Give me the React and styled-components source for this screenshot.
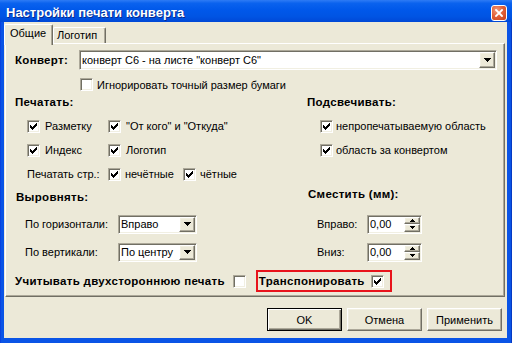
import React from 'react';
import styled, { createGlobalStyle, css } from 'styled-components';

const FACE = '#ECE9D8';
const LIGHT = '#F1EFE2';
const SHADOW = '#ACA899';
const DARK = '#716F64';

const Global = createGlobalStyle`
  html, body { margin: 0; padding: 0; width: 512px; height: 343px; overflow: hidden; background: ${FACE}; }
  body { font-family: "Liberation Sans", Arial, sans-serif; font-size: 11px; color: #000; }
  * { box-sizing: border-box; }
`;

const boldText = css`
  font-weight: bold;
  font-size: 11.5px;
  letter-spacing: 0.3px;
`;

const sunken = css`
  border: 1px solid;
  border-color: ${SHADOW} #fff #fff ${SHADOW};
  box-shadow: inset 1px 1px 0 ${DARK}, inset -1px -1px 0 ${LIGHT};
`;

const raised = css`
  border: 1px solid;
  border-color: #fff ${DARK} ${DARK} #fff;
  box-shadow: inset -1px -1px 0 ${SHADOW}, inset 1px 1px 0 ${LIGHT};
`;

const Window = styled.div`
  width: 512px;
  height: 343px;
  display: flex;
  flex-direction: column;
  background: #0A54E6;
`;

const TitleBar = styled.div`
  height: 22px;
  flex: none;
  display: flex;
  align-items: center;
  padding: 4px 5px 0 6px;
  background: linear-gradient(#2E7BF5 0%, #0A62EE 15%, #0058EA 45%, #0054E3 75%, #0048D6 100%);
`;

const TitleText = styled.div`
  flex: 1;
  color: #fff;
  font-weight: bold;
  font-size: 13px;
  line-height: 16px;
  text-shadow: 1px 1px 0 #0A2A8C;
  white-space: nowrap;
`;

const CloseButton = styled.div`
  width: 16px;
  height: 16px;
  border: 1px solid #fff;
  border-radius: 3px;
  background: radial-gradient(circle at 35% 30%, #F19A7A 0%, #E2623A 45%, #C8401A 100%);
  display: flex;
  align-items: center;
  justify-content: center;
`;

const Frame = styled.div`
  flex: 1;
  display: flex;
  padding: 0 5px 5px 4px;
  background: linear-gradient(90deg, #0831D9 0, #0A54E6 1px, #0A54E6 calc(100% - 1px), #001EA0 100%);
`;

const Client = styled.div`
  flex: 1;
  display: flex;
  flex-direction: column;
  background: ${FACE};
`;

const TabStrip = styled.div`
  height: 19px;
  margin-top: 2px;
  display: flex;
  align-items: flex-end;
  flex: none;
`;

const Tab = styled.div`
  position: relative;
  background: ${FACE};
  border-top: 1px solid #fff;
  border-left: 1px solid #fff;
  border-right: 1px solid ${DARK};
  box-shadow: inset -1px 0 0 ${SHADOW};
  border-radius: 2px 2px 0 0;
  line-height: 13px;
  white-space: nowrap;
  ${(p) =>
    p.$active
      ? css`
          z-index: 1;
          width: 49px;
          height: 21px;
          margin-bottom: -2px;
          padding: 2px 0 0 5px;
        `
      : css`
          width: 53px;
          height: 16px;
          padding: 1px 0 0 3px;
        `}
`;

const Panel = styled.div`
  height: 254px;
  flex: none;
  margin: 0 2px 0 1px;
  border-top: 1px solid #fff;
  border-left: 1px solid #fff;
  border-right: 1px solid ${DARK};
  border-bottom: 1px solid ${DARK};
  box-shadow: inset -1px -1px 0 ${SHADOW};
  padding: 6px 0 0 9px;
  display: flex;
  flex-direction: column;
`;

const EnvelopeRow = styled.div`
  display: flex;
  align-items: center;
  height: 20px;
`;

const BoldLabel = styled.span`
  ${boldText};
  white-space: nowrap;
  ${(p) => p.$w && css`width: ${p.$w}px; flex: none;`}
`;

const Combo = styled.div`
  width: ${(p) => p.$w}px;
  height: ${(p) => p.$h}px;
  ${sunken};
  background: #fff;
  padding: 1px;
  display: flex;
  align-items: stretch;
  flex: none;
`;

const FieldValue = styled.div`
  flex: 1;
  display: flex;
  align-items: center;
  padding-left: 1px;
  white-space: nowrap;
  overflow: hidden;
`;

const DropButton = styled.div`
  width: 16px;
  flex: none;
  background: ${FACE};
  ${raised};
  display: flex;
  align-items: center;
  justify-content: center;
`;

const SpinButtons = styled.div`
  width: 16px;
  flex: none;
  display: flex;
  flex-direction: column;
`;

const SpinBtn = styled.div`
  flex: 1;
  background: ${FACE};
  ${raised};
  display: flex;
  align-items: center;
  justify-content: center;
`;

const IgnoreRow = styled.div`
  margin: 8px 0 0 65px;
  height: 13px;
  display: flex;
  align-items: center;
`;

const Columns = styled.div`
  display: grid;
  grid-template-columns: 292px 1fr;
`;

const Column = styled.div`
  display: flex;
  flex-direction: column;
`;

const SectionTitle = styled.div`
  ${boldText};
  line-height: 14px;
  height: 14px;
  margin-top: ${(p) => p.$mt}px;
  padding-left: ${(p) => p.$pl || 0}px;
  white-space: nowrap;
`;

const CheckRows = styled.div`
  margin-top: 5px;
  padding-left: ${(p) => p.$pl}px;
  display: flex;
  flex-direction: column;
`;

const CheckRow = styled.div`
  height: 24px;
  display: flex;
  align-items: center;
`;

const CheckCell = styled.div`
  width: ${(p) => p.$w}px;
  flex: none;
  display: flex;
  align-items: center;
`;

const CheckWrap = styled.label`
  display: flex;
  align-items: center;
  gap: ${(p) => p.$gap ?? 4}px;
  margin-left: ${(p) => p.$ml || 0}px;
  white-space: nowrap;
`;

const CheckBoxBox = styled.span`
  width: 13px;
  height: 13px;
  flex: none;
  background: #fff;
  ${sunken};
  display: block;
`;

const FieldRows = styled.div`
  margin-top: ${(p) => p.$mt}px;
  display: flex;
  flex-direction: column;
`;

const FieldRow = styled.div`
  height: 28px;
  display: flex;
  align-items: center;
  padding-left: ${(p) => p.$pl}px;
`;

const FieldLabel = styled.span`
  width: ${(p) => p.$w}px;
  flex: none;
  white-space: nowrap;
`;

const BottomRow = styled.div`
  margin-top: 4px;
  height: 22px;
  display: flex;
  align-items: center;
`;

const Highlight = styled.div`
  margin-left: 10px;
  height: 22px;
  border: 2px solid #E8131B;
  display: flex;
  align-items: center;
  padding: 0 6px 0 1px;
`;

const Footer = styled.div`
  display: flex;
  justify-content: flex-end;
  gap: 5px;
  margin-top: 11px;
  padding-right: 5px;
`;

const Button = styled.div`
  width: 75px;
  height: 23px;
  display: flex;
  align-items: center;
  justify-content: center;
  background: ${FACE};
  ${raised};
  ${(p) =>
    p.$default &&
    css`
      border: 1px solid #000;
      box-shadow: inset 1px 1px 0 #fff, inset -1px -1px 0 ${DARK}, inset -2px -2px 0 ${SHADOW};
    `}
`;

const CHECK_PATH =
  'M3 5h1v3h-1z M4 6h1v3h-1z M5 7h1v3h-1z M6 6h1v3h-1z M7 5h1v3h-1z M8 4h1v3h-1z M9 3h1v3h-1z';

function Check({ checked, label, gap, ml }) {
  return (
    <CheckWrap $gap={gap} $ml={ml}>
      <CheckBoxBox>
        {checked && (
          <svg width="11" height="11" viewBox="1 1 11 11" shapeRendering="crispEdges" style={{ display: 'block' }}>
            <path d={CHECK_PATH} fill="#000" />
          </svg>
        )}
      </CheckBoxBox>
      {label}
    </CheckWrap>
  );
}

function DownArrow() {
  return (
    <svg width="7" height="4" viewBox="0 0 7 4" shapeRendering="crispEdges" style={{ display: 'block' }}>
      <path d="M0 0h7v1h-1v1h-1v1h-1v1h-1v-1h-1v-1h-1v-1h-1z" fill="#000" />
    </svg>
  );
}

function SmallArrow({ up }) {
  return (
    <svg width="5" height="3" viewBox="0 0 5 3" shapeRendering="crispEdges" style={{ display: 'block', transform: up ? 'scaleY(-1)' : 'none' }}>
      <path d="M0 0h5v1h-1v1h-1v1h-1v-1h-1v-1h-1z" fill="#000" />
    </svg>
  );
}

function ComboBox({ w, h, value }) {
  return (
    <Combo $w={w} $h={h}>
      <FieldValue>{value}</FieldValue>
      <DropButton>
        <DownArrow />
      </DropButton>
    </Combo>
  );
}

function SpinEdit({ value }) {
  return (
    <Combo $w={55} $h={19}>
      <FieldValue>{value}</FieldValue>
      <SpinButtons>
        <SpinBtn>
          <SmallArrow up />
        </SpinBtn>
        <SpinBtn>
          <SmallArrow />
        </SpinBtn>
      </SpinButtons>
    </Combo>
  );
}

export default function App() {
  return (
    <>
      <Global />
      <Window>
        <TitleBar>
          <TitleText>Настройки печати конверта</TitleText>
          <CloseButton>
            <svg width="8" height="8" viewBox="0 0 8 8">
              <path d="M1 1L7 7M7 1L1 7" stroke="#fff" strokeWidth="1.8" strokeLinecap="square" />
            </svg>
          </CloseButton>
        </TitleBar>
        <Frame>
          <Client>
            <TabStrip>
              <Tab $active>Общие</Tab>
              <Tab>Логотип</Tab>
            </TabStrip>
            <Panel>
              <EnvelopeRow>
                <BoldLabel $w={64}>Конверт:</BoldLabel>
                <ComboBox w={418} h={20} value={'конверт С6 - на листе "конверт С6"'} />
              </EnvelopeRow>
              <IgnoreRow>
                <Check label="Игнорировать точный размер бумаги" />
              </IgnoreRow>
              <Columns>
                <Column>
                  <SectionTitle $mt={4}>Печатать:</SectionTitle>
                  <CheckRows $pl={12}>
                    <CheckRow>
                      <CheckCell $w={81}>
                        <Check checked label="Разметку" gap={5} />
                      </CheckCell>
                      <Check checked label={'"От кого" и "Откуда"'} gap={5} />
                    </CheckRow>
                    <CheckRow>
                      <CheckCell $w={81}>
                        <Check checked label="Индекс" gap={5} />
                      </CheckCell>
                      <Check checked label="Логотип" gap={5} />
                    </CheckRow>
                    <CheckRow>
                      <CheckCell $w={81}>Печатать стр.:</CheckCell>
                      <CheckCell $w={75}>
                        <Check checked label="нечётные" gap={4} />
                      </CheckCell>
                      <Check checked label="чётные" gap={4} />
                    </CheckRow>
                  </CheckRows>
                  <SectionTitle $mt={4} $pl={1}>Выровнять:</SectionTitle>
                  <FieldRows $mt={6}>
                    <FieldRow $pl={10}>
                      <FieldLabel $w={93}>По горизонтали:</FieldLabel>
                      <ComboBox w={79} h={19} value="Вправо" />
                    </FieldRow>
                    <FieldRow $pl={10}>
                      <FieldLabel $w={93}>По вертикали:</FieldLabel>
                      <ComboBox w={79} h={19} value="По центру" />
                    </FieldRow>
                  </FieldRows>
                </Column>
                <Column>
                  <SectionTitle $mt={4}>Подсвечивать:</SectionTitle>
                  <CheckRows $pl={13}>
                    <CheckRow>
                      <Check checked label="непропечатываемую область" gap={3} />
                    </CheckRow>
                    <CheckRow>
                      <Check checked label="область за конвертом" gap={3} />
                    </CheckRow>
                  </CheckRows>
                  <SectionTitle $mt={25} $pl={1}>Сместить (мм):</SectionTitle>
                  <FieldRows $mt={9}>
                    <FieldRow $pl={10}>
                      <FieldLabel $w={50}>Вправо:</FieldLabel>
                      <SpinEdit value="0,00" />
                    </FieldRow>
                    <FieldRow $pl={10}>
                      <FieldLabel $w={50}>Вниз:</FieldLabel>
                      <SpinEdit value="0,00" />
                    </FieldRow>
                  </FieldRows>
                </Column>
              </Columns>
              <BottomRow>
                <BoldLabel>Учитывать двухстороннюю печать</BoldLabel>
                <Check ml={8} />
                <Highlight>
                  <BoldLabel>Транспонировать</BoldLabel>
                  <Check checked ml={6} />
                </Highlight>
              </BottomRow>
            </Panel>
            <Footer>
              <Button $default>OK</Button>
              <Button>Отмена</Button>
              <Button>Применить</Button>
            </Footer>
          </Client>
        </Frame>
      </Window>
    </>
  );
}
